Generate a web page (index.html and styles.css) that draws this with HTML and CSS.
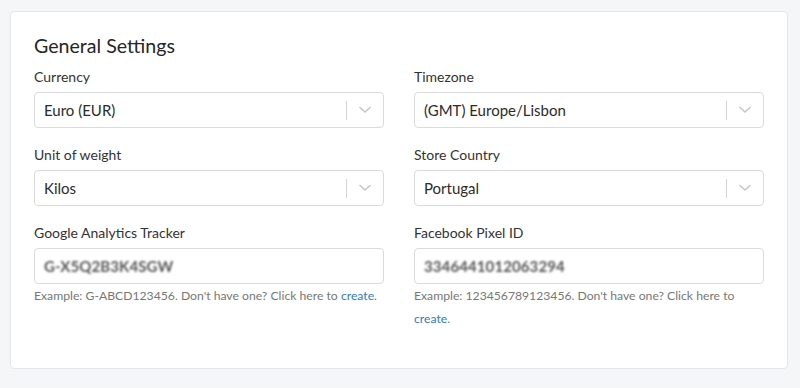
FILE: index.html
```html
<!DOCTYPE html>
<html>
<head>
<meta charset="utf-8">
<link rel="stylesheet" href="styles.css">
</head>
<body>
<div class="card">
  <h2 class="title">General Settings</h2>
  <div class="grid">
    <div class="field">
      <label class="label">Currency</label>
      <div class="select">
        <span class="value">Euro (EUR)</span>
        <span class="sep"></span>
        <span class="chev"><svg width="12" height="8" viewBox="0 0 12 8"><polyline points="1,1.5 6,6 11,1.5" fill="none" stroke="#c6c6c6" stroke-width="1.6" stroke-linecap="round" stroke-linejoin="round"/></svg></span>
      </div>
    </div>
    <div class="field">
      <label class="label">Timezone</label>
      <div class="select">
        <span class="value">(GMT) Europe/Lisbon</span>
        <span class="sep"></span>
        <span class="chev"><svg width="12" height="8" viewBox="0 0 12 8"><polyline points="1,1.5 6,6 11,1.5" fill="none" stroke="#c6c6c6" stroke-width="1.6" stroke-linecap="round" stroke-linejoin="round"/></svg></span>
      </div>
    </div>
    <div class="field">
      <label class="label">Unit of weight</label>
      <div class="select">
        <span class="value">Kilos</span>
        <span class="sep"></span>
        <span class="chev"><svg width="12" height="8" viewBox="0 0 12 8"><polyline points="1,1.5 6,6 11,1.5" fill="none" stroke="#c6c6c6" stroke-width="1.6" stroke-linecap="round" stroke-linejoin="round"/></svg></span>
      </div>
    </div>
    <div class="field">
      <label class="label">Store Country</label>
      <div class="select">
        <span class="value">Portugal</span>
        <span class="sep"></span>
        <span class="chev"><svg width="12" height="8" viewBox="0 0 12 8"><polyline points="1,1.5 6,6 11,1.5" fill="none" stroke="#c6c6c6" stroke-width="1.6" stroke-linecap="round" stroke-linejoin="round"/></svg></span>
      </div>
    </div>
    <div class="field">
      <label class="label">Google Analytics Tracker</label>
      <div class="input"><span class="blur">G-X5Q2B3K4SGW</span></div>
      <p class="help">Example: G-ABCD123456. Don't have one? Click here to <a class="link">create</a>.</p>
    </div>
    <div class="field">
      <label class="label">Facebook Pixel ID</label>
      <div class="input"><span class="blur">3346441012063294</span></div>
      <p class="help">Example: 123456789123456. Don't have one? Click here to <a class="link">create</a>.</p>
    </div>
  </div>
</div>
</body>
</html>
```

FILE: styles.css
```css
html, body {
  margin: 0;
  padding: 0;
  background: #f5f6f8;
  font-family: "Lato", "Liberation Sans", sans-serif;
  color: #333;
}
.card {
  margin: 11px 0 0 10px;
  width: 778px;
  height: 358px;
  box-sizing: border-box;
  background: #fff;
  border: 1px solid #e4e6ea;
  border-radius: 4px;
  padding: 23px 23px 0 23px;
}
.title {
  margin: 0 0 11px 0;
  font-size: 19.6px;
  line-height: 22px;
  font-weight: 400;
  color: #262626;
}
.grid {
  display: grid;
  grid-template-columns: 1fr 1fr;
  column-gap: 30px;
  row-gap: 18px;
}
.field {
  display: flex;
  flex-direction: column;
}
.label {
  font-size: 14px;
  line-height: 18px;
  margin-bottom: 6px;
  color: #333;
}
.select, .input {
  height: 36px;
  box-sizing: border-box;
  border: 1px solid #d9dbdf;
  border-radius: 4px;
  display: flex;
  align-items: center;
  padding-left: 9px;
  background: #fff;
}
.value {
  flex: 1;
  font-size: 15px;
  color: #2b2b2b;
}
.sep {
  width: 1px;
  height: 19px;
  background: #d4d4d4;
}
.chev {
  width: 36px;
  display: flex;
  justify-content: center;
  align-items: center;
}
.blur {
  font-size: 15px;
  font-weight: 700;
  color: #555;
  filter: blur(1.1px);
  letter-spacing: 0.1px;
}
.help {
  margin: 0;
  font-size: 12.2px;
  line-height: 23px;
  color: #777;
}
.link {
  color: #2f7bc2;
  text-decoration: none;
}
```
